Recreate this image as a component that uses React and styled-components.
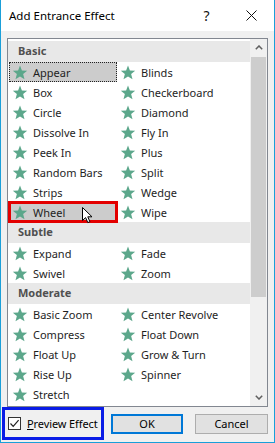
import React from "react";
import styled, { createGlobalStyle } from "styled-components";

const Global = createGlobalStyle`
  html, body { margin: 0; padding: 0; background: #f0f0f0; overflow: hidden; }
  body { font-family: "Noto Sans", "Liberation Sans", sans-serif; }
`;

const Window = styled.div`
  width: 275px;
  height: 443px;
  box-sizing: border-box;
  border-left: 1px solid #1a9fd9;
  border-right: 1px solid #1a9fd9;
  border-bottom: 1px solid #1a9fd9;
  background: #f0f0f0;
  display: flex;
  flex-direction: column;
`;

const TitleBar = styled.div`
  height: 31px;
  flex: none;
  background: #ffffff;
  display: flex;
  align-items: center;
  padding-left: 8px;
`;

const Title = styled.div`
  font-size: 11.5px;
  color: #000;
  flex: 1;
  margin-top: -1px;
`;

const TitleButton = styled.div`
  width: 45px;
  height: 31px;
  display: flex;
  align-items: center;
  justify-content: center;
  font-size: 14px;
  color: #111;
`;

const Client = styled.div`
  flex: 1;
  display: flex;
  flex-direction: column;
  padding-top: 7px;
  padding-left: 6px;
`;

const ListBox = styled.div`
  width: 261px;
  height: 369px;
  box-sizing: border-box;
  border: 1px solid #828790;
  background: #ffffff;
  display: flex;
  overflow: hidden;
`;

const ListContent = styled.div`
  width: 242px;
  flex: none;
  padding-top: 2px;
  overflow: hidden;
`;

const GroupHeader = styled.div`
  height: 21px;
  background: #e8e8e8;
  display: flex;
  align-items: center;
  padding-left: 10px;
  padding-bottom: 2px;
  box-sizing: border-box;
  font-size: 11px;
  font-weight: 700;
  color: #505050;
`;

const ItemGrid = styled.div`
  display: grid;
  grid-template-columns: 108px 108px;
  padding-left: 1px;
`;

const Item = styled.div`
  position: relative;
  height: 20px;
  box-sizing: border-box;
  display: flex;
  align-items: center;
  gap: 5px;
  padding-left: 2px;
  font-size: 11px;
  color: #1e1e1e;
  background: ${(p) => (p.$selected || p.$hover ? "#cccccc" : "transparent")};
  border: 1px dotted ${(p) => (p.$selected ? "#222" : "transparent")};
  outline: ${(p) => (p.$marked ? "3px solid #e30000" : "none")};
  outline-offset: -2px;
`;

const Cursor = styled.svg`
  position: absolute;
  left: 72px;
  top: 4px;
`;

const ScrollBar = styled.div`
  width: 17px;
  flex: none;
  background: #f0f0f0;
  display: flex;
  flex-direction: column;
`;

const ScrollArrow = styled.div`
  height: 17px;
  flex: none;
  display: flex;
  align-items: center;
  justify-content: center;
`;

const ScrollTrack = styled.div`
  flex: 1;
  display: flex;
  flex-direction: column;
`;

const Thumb = styled.div`
  height: 240px;
  margin: 1px 1px 0 1px;
  background: #cdcdcd;
`;

const Footer = styled.div`
  height: 35px;
  display: flex;
  align-items: center;
  margin-left: -5px;
  padding-bottom: 2px;
  box-sizing: border-box;
`;

const PreviewBox = styled.div`
  width: 102px;
  height: 33px;
  box-sizing: border-box;
  border: 3px solid #0a1ce6;
  display: flex;
  align-items: center;
  padding-left: 3px;
  gap: 6px;
  font-size: 11px;
  letter-spacing: -0.1px;
  color: #000;
`;

const CheckBox = styled.div`
  width: 13px;
  height: 13px;
  box-sizing: border-box;
  border: 1px solid #333;
  background: #fff;
  display: flex;
  align-items: center;
  justify-content: center;
  flex: none;
`;

const Button = styled.div`
  height: 20px;
  box-sizing: border-box;
  width: ${(p) => p.$w}px;
  margin-left: ${(p) => p.$ml}px;
  background: #e1e1e1;
  border: ${(p) => (p.$default ? "2px solid #0078d7" : "1px solid #adadad")};
  display: flex;
  align-items: center;
  justify-content: center;
  font-size: 11px;
  color: #000;
`;

const Star = () => (
  <svg width="16" height="15" viewBox="0 0 24 23" style={{ flex: "none" }}>
    <polygon
      points="12,0.8 14.9,8.3 23,8.8 16.8,13.9 18.9,22 12,17.5 5.1,22 7.2,13.9 1,8.8 9.1,8.3"
      fill="#5ca78b"
    />
  </svg>
);

const Chevron = ({ up }) => (
  <svg width="8" height="5" viewBox="0 0 8 5">
    <polyline
      points={up ? "0.8,4.3 4,1 7.2,4.3" : "0.8,0.7 4,4 7.2,0.7"}
      fill="none"
      stroke="#606060"
      strokeWidth="1.5"
    />
  </svg>
);

const groups = [
  {
    name: "Basic",
    items: [
      "Appear", "Blinds",
      "Box", "Checkerboard",
      "Circle", "Diamond",
      "Dissolve In", "Fly In",
      "Peek In", "Plus",
      "Random Bars", "Split",
      "Strips", "Wedge",
      "Wheel", "Wipe",
    ],
  },
  { name: "Subtle", items: ["Expand", "Fade", "Swivel", "Zoom"] },
  {
    name: "Moderate",
    items: [
      "Basic Zoom", "Center Revolve",
      "Compress", "Float Down",
      "Float Up", "Grow & Turn",
      "Rise Up", "Spinner",
      "Stretch",
    ],
  },
];

export default function App() {
  return (
    <>
      <Global />
      <Window>
        <TitleBar>
          <Title>Add Entrance Effect</Title>
          <TitleButton>?</TitleButton>
          <TitleButton>
            <svg width="11" height="11" viewBox="0 0 11 11">
              <path d="M0.5 0.5 L10.5 10.5 M10.5 0.5 L0.5 10.5" stroke="#111" strokeWidth="1" />
            </svg>
          </TitleButton>
        </TitleBar>
        <Client>
          <ListBox>
            <ListContent>
              {groups.map((g) => (
                <div key={g.name}>
                  <GroupHeader>{g.name}</GroupHeader>
                  <ItemGrid>
                    {g.items.map((it) => (
                      <Item
                        key={it}
                        $selected={it === "Appear"}
                        $hover={it === "Wheel"}
                        $marked={it === "Wheel"}
                      >
                        <Star />
                        {it}
                        {it === "Wheel" && (
                          <Cursor width="12" height="18" viewBox="0 0 12 18">
                            <path
                              d="M0.5 0.5 L0.5 13.5 L3.6 10.6 L5.8 15.6 L7.9 14.7 L5.8 9.8 L10 9.8 Z"
                              fill="#fff"
                              stroke="#000"
                              strokeWidth="1"
                              strokeLinejoin="miter"
                            />
                          </Cursor>
                        )}
                      </Item>
                    ))}
                  </ItemGrid>
                </div>
              ))}
            </ListContent>
            <ScrollBar>
              <ScrollArrow>
                <Chevron up />
              </ScrollArrow>
              <ScrollTrack>
                <Thumb />
              </ScrollTrack>
              <ScrollArrow>
                <Chevron />
              </ScrollArrow>
            </ScrollBar>
          </ListBox>
          <Footer>
            <PreviewBox>
              <CheckBox>
                <svg width="11" height="11" viewBox="0 0 11 11">
                  <polyline points="1.5,5.5 4.2,8.3 9.6,2.2" fill="none" stroke="#222" strokeWidth="1.2" />
                </svg>
              </CheckBox>
              <span>
                <u>P</u>review Effect
              </span>
            </PreviewBox>
            <Button $default $w={72} $ml={7}>OK</Button>
            <Button $w={73} $ml={12}>Cancel</Button>
          </Footer>
        </Client>
      </Window>
    </>
  );
}
